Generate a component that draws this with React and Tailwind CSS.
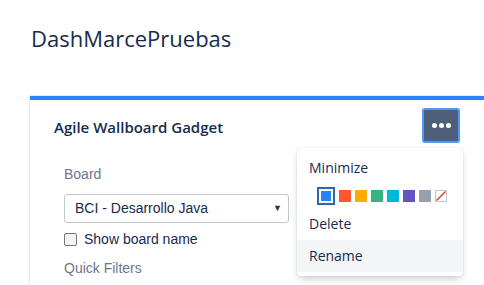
import React from 'react'

const swatches = ['#ff5630', '#ffab00', '#36b37e', '#00b8d9', '#6554c0', '#97a0af']

export default function App() {
  return (
    <div className="relative w-[484px] h-[285px] overflow-hidden bg-white" style={{ fontFamily: '"Open Sans", sans-serif' }}>
      <h1 className="pl-[31px] pt-[24px] text-[22px] leading-[28px] text-[#172b4d]">DashMarcePruebas</h1>

      <div className="ml-[30px] mt-[44px] h-[200px] border-t-4 border-[#2684ff] bg-white shadow-[0_0_2px_rgba(9,30,66,0.25)]">
        <div className="flex items-start justify-between pl-[24px] pr-[24px] pt-[8px]">
          <h2 className="pt-[9px] text-[15px] font-semibold leading-[20px] text-[#172b4d]">Agile Wallboard Gadget</h2>
          <button className="flex h-[35px] w-[38px] items-center justify-center gap-[2px] rounded-[3px] border-2 border-[#4c9aff] bg-[#505f79]">
            <span className="h-[5px] w-[5px] rounded-full bg-white" />
            <span className="h-[5px] w-[5px] rounded-full bg-white" />
            <span className="h-[5px] w-[5px] rounded-full bg-white" />
          </button>
        </div>

        <div className="pl-[34px] pt-[23px]" style={{ fontFamily: '"Liberation Sans", Arial, sans-serif' }}>
          <div className="text-[14px] leading-[16px] text-[#6b778c]">Board</div>
          <div className="mt-[12px] flex h-[29px] w-[225px] items-center justify-between rounded-[3px] border border-[#c1c7d0] pl-[10px] pr-[6px] text-[14px] text-[#172b4d]">
            <span>BCI - Desarrollo Java</span>
            <span className="text-[9px] text-[#333]">▼</span>
          </div>
          <label className="mt-[6px] flex items-center gap-[7px] text-[14px] text-[#172b4d]">
            <span className="h-[13px] w-[13px] rounded-[2px] border border-[#767676] bg-[#f4f5f7]" />
            <span>Show board name</span>
          </label>
          <div className="mt-[8px] text-[14px] text-[#6b778c]">Quick Filters</div>
        </div>
      </div>

      <div className="absolute left-[297px] top-[148px] w-[166px] rounded-[3px] bg-white pt-[4px] pb-[4px] shadow-[0_4px_8px_-2px_rgba(9,30,66,0.25),0_0_1px_rgba(9,30,66,0.31)]">
        <div className="px-[12px] py-[6px] text-[14px] leading-[20px] text-[#172b4d]">Minimize</div>
        <div className="flex items-center gap-[4px] pl-[20px] pt-[3px] pb-[3px]">
          <span className="flex h-[18px] w-[18px] items-center justify-center border-2 border-[#2d67a8]">
            <span className="h-[12px] w-[12px] border border-white bg-[#2684ff]" />
          </span>
          {swatches.map((c) => (
            <span key={c} className="h-[12px] w-[12px]" style={{ backgroundColor: c }} />
          ))}
          <svg width="12" height="12" viewBox="0 0 12 12">
            <rect x="0.5" y="0.5" width="11" height="11" fill="white" stroke="#c1c7d0" />
            <line x1="1.5" y1="10.5" x2="10.5" y2="1.5" stroke="#de350b" strokeWidth="1.3" />
          </svg>
        </div>
        <div className="px-[12px] py-[6px] text-[14px] leading-[20px] text-[#172b4d]">Delete</div>
        <div className="bg-[#f4f5f7] px-[12px] py-[6px] text-[14px] leading-[20px] text-[#172b4d]">Rename</div>
      </div>
    </div>
  )
}
